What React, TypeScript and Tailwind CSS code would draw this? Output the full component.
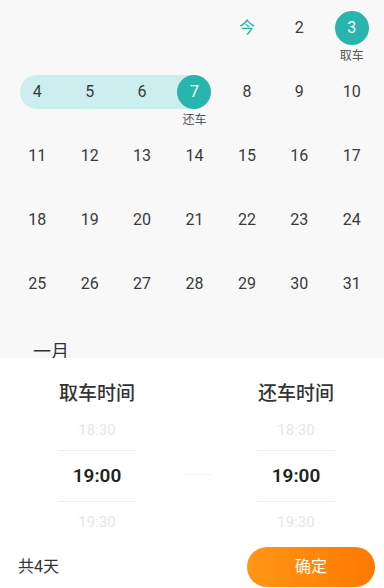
import React from "react";

type Day = {
  label: string;
  today?: boolean;
  picked?: "start" | "end";
  inRange?: boolean;
  note?: string;
};

const font = { fontFamily: '"Roboto", "Noto Sans CJK SC", sans-serif' };

const rows: (Day | null)[][] = [
  [null, null, null, null, { label: "今", today: true }, { label: "2" }, { label: "3", picked: "start", note: "取车" }],
  [
    { label: "4", inRange: true },
    { label: "5", inRange: true },
    { label: "6", inRange: true },
    { label: "7", picked: "end", note: "还车" },
    { label: "8" },
    { label: "9" },
    { label: "10" },
  ],
  ["11", "12", "13", "14", "15", "16", "17"].map((label) => ({ label })),
  ["18", "19", "20", "21", "22", "23", "24"].map((label) => ({ label })),
  ["25", "26", "27", "28", "29", "30", "31"].map((label) => ({ label })),
];

function DayCell({ day, first }: { day: Day | null; first: boolean }) {
  if (!day) return <div className="h-16" />;

  return (
    <div className="flex h-16 flex-col items-center">
      <div className="relative flex h-[34px] w-full items-center justify-center">
        {day.inRange && first ? (
          <div className="absolute inset-y-0 right-0 left-[calc(50%-17px)] rounded-l-full bg-[#cdeeee]" />
        ) : null}
        {day.inRange && !first ? <div className="absolute inset-0 bg-[#cdeeee]" /> : null}
        {day.picked === "end" ? <div className="absolute inset-y-0 left-0 right-1/2 bg-[#cdeeee]" /> : null}
        {day.picked ? (
          <div className="relative flex h-[34px] w-[34px] items-center justify-center rounded-full bg-[#2ab4ae] text-[16px] text-white">
            {day.label}
          </div>
        ) : (
          <span className={`relative text-[16px] ${day.today ? "text-[#2ab4ae]" : "text-[#3a3a3a]"}`}>{day.label}</span>
        )}
      </div>
      {day.note ? <span className="mt-[3px] text-[12px] leading-4 text-[#555555]">{day.note}</span> : null}
    </div>
  );
}

function TimeColumn({ title }: { title: string }) {
  return (
    <div className="flex w-[78px] flex-col items-center">
      <h2 className="whitespace-nowrap text-[19px] font-medium leading-6 text-[#333333]">{title}</h2>
      <div className="flex h-11 w-full items-center justify-center pt-1 text-[15px] text-[#e6e6e6]">18:30</div>
      <div className="flex h-[52px] w-full items-center justify-center border-y border-[#eeeeee] text-[19px] font-semibold text-[#222222]">
        19:00
      </div>
      <div className="flex h-10 w-full items-center justify-center text-[15px] text-[#e6e6e6]">19:30</div>
    </div>
  );
}

export default function App() {
  return (
    <div className="flex h-[588px] w-[384px] flex-col overflow-hidden bg-[#f8f8f8]" style={font}>
      <div className="grid grid-cols-7 pt-[11px] pr-[6px] pl-[11px]">
        {rows.map((row, r) =>
          row.map((day, c) => <DayCell key={`${r}-${c}`} day={day} first={c === 0} />),
        )}
      </div>
      <div className="flex h-[27px] items-end pl-[33px] text-[18px] leading-[12px] text-[#333333]">一月</div>

      <div className="flex flex-1 flex-col bg-white pt-6">
        <div className="flex items-start pl-[58px]">
          <TimeColumn title="取车时间" />
          <div className="flex w-[121px] justify-center pt-[92px]">
            <div className="h-px w-7 bg-[#f3f3f3]" />
          </div>
          <TimeColumn title="还车时间" />
        </div>
        <div className="mt-[5px] flex items-center justify-between pr-[9px] pl-[18px]">
          <span className="text-[16px] text-[#333333]">共4天</span>
          <button
            type="button"
            className="flex h-10 w-[128px] items-center justify-center rounded-full bg-gradient-to-r from-[#ff9614] to-[#ff7800] text-[16px] text-white"
          >
            确定
          </button>
        </div>
      </div>
    </div>
  );
}
